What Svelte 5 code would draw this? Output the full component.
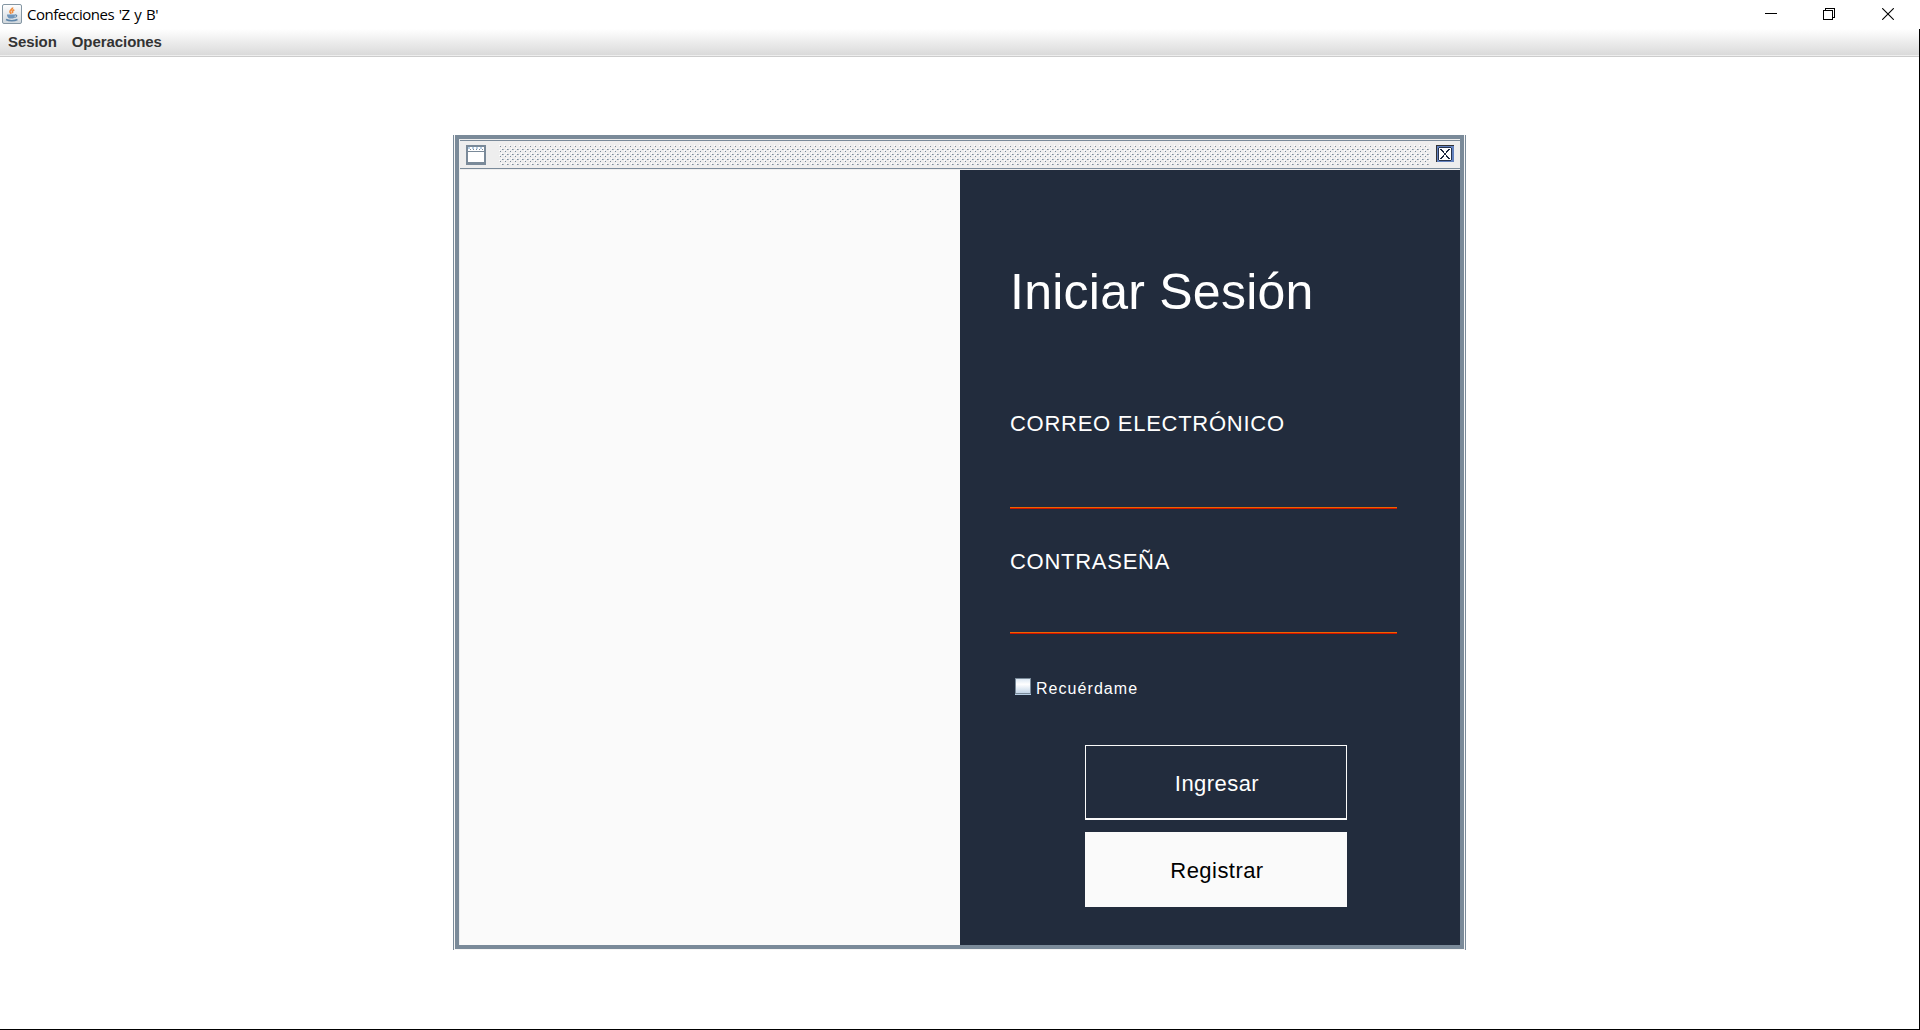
<script>
  const menus = ['Sesion', 'Operaciones'];
  let remember = $state(false);
</script>

<div class="app">
  <header class="titlebar">
    <svg class="java" width="20" height="20" viewBox="0 0 20 20">
      <defs>
        <linearGradient id="tile" x1="0" y1="0" x2="0" y2="1">
          <stop offset="0" stop-color="#ffffff" />
          <stop offset="1" stop-color="#cfd6dc" />
        </linearGradient>
      </defs>
      <rect x="0.5" y="0.5" width="19" height="19" rx="1.5" fill="url(#tile)" stroke="#8496a3" />
      <path d="M10.500 3.500c.6 1.800-3.100 2.700-2.500 4.500.3.800.9 1.100 1 1.900M12.300 5.700c-2 1-2.400 2-1.400 3.300" fill="none" stroke="#ee8a3c" stroke-width="1.700" />
      <path d="M5 10.500h8c0 2-.7 3.500-2 4h-3.500c-1.600-.5-2.500-2-2.500-4z" fill="#7095ba" />
      <path d="M13 11c2.500-.4 2.300 2.200-.7 2.500" fill="none" stroke="#5f86aa" stroke-width="1.200" />
      <path d="M4 15.500c3 1.500 8.500 1.500 11.500 0" fill="none" stroke="#5f86aa" stroke-width="1.500" />
    </svg>
    <span class="title">Confecciones 'Z y B'</span>
    <div class="controls">
      <svg width="12" height="12" viewBox="0 0 12 12" shape-rendering="crispEdges"><path d="M0 5.500h12" stroke="#000" /></svg>
      <svg width="12" height="12" viewBox="0 0 12 12" shape-rendering="crispEdges">
        <path d="M.5 2.500h9v9h-9zM2.500 2V.5h9v9H10" fill="none" stroke="#000" />
      </svg>
      <svg width="12" height="12" viewBox="0 0 12 12"><path d="M.2.200l11.600 11.600M11.800.200L.2 11.800" stroke="#000" stroke-width="1.100" /></svg>
    </div>
  </header>

  <div class="body">
    <nav class="menubar">
      {#each menus as menu}<span>{menu}</span>{/each}
    </nav>
    <main class="desktop">
      <section class="frame">
        <div class="bevel">
          <div class="caption">
            <svg width="20" height="20" viewBox="0 0 20 20" shape-rendering="crispEdges">
              <rect width="20" height="20" rx="1" fill="#7a8a99" />
              <rect x="2" y="2" width="16" height="4" fill="#fff" />
              <path d="M2 3h16" stroke="#b8cfe5" stroke-width="2" stroke-dasharray="2 2" />
              <path d="M4 4.500h14" stroke="#7a8a99" stroke-dasharray="1 2" />
              <rect x="2" y="7" width="16" height="10" fill="#fff" />
            </svg>
            <svg class="bumps" width="931" height="20" shape-rendering="crispEdges">
              <defs>
                <pattern id="bump" width="5" height="5" patternUnits="userSpaceOnUse">
                  <rect x="0" y="0" width="1" height="1" fill="#fff" />
                  <rect x="1" y="1" width="1" height="1" fill="#7a8a99" />
                  <rect x="2" y="3" width="1" height="1" fill="#fff" />
                  <rect x="3" y="4" width="1" height="1" fill="#7a8a99" />
                  <rect x="4" y="4" width="1" height="1" fill="#a9b4be" />
                </pattern>
              </defs>
              <rect width="931" height="20" fill="url(#bump)" />
            </svg>
            <svg width="18" height="17" viewBox="0 0 18 17" shape-rendering="crispEdges">
              <rect width="18" height="17" fill="#6382bf" />
              <path d="M0 .5h18M.5 0v17" stroke="#333" />
              <rect x="3" y="3" width="12" height="12" fill="#fff" />
              <path d="M3 2.500h12M3 15.500h12M2.500 3v12M15.500 3v12" stroke="#26344f" />
              <path d="M4 4h2v1h1v1h1v2h2V6h1V5h1V4h2v1h-1v1h-1v1h-1v1h-1v2h1v1h1v1h1v1h1v1h-2v-1h-1v-1h-1v-2H8v2H7v1H6v1H4v-1h1v-1h1v-1h1v-1h1V8H7V7H6V6H5V5H4z" fill="#1b2740" />
            </svg>
          </div>
          <div class="content">
            <div class="left"></div>
            <form class="login">
              <h1>Iniciar Sesión</h1>
              <label class="field">CORREO ELECTRÓNICO<span class="line"></span></label>
              <label class="field second">CONTRASEÑA<span class="line"></span></label>
              <label class="remember">
                <input type="checkbox" bind:checked={remember} /><span>Recuérdame</span>
              </label>
              <button type="button" class="enter">Ingresar</button>
              <button type="button" class="register">Registrar</button>
            </form>
          </div>
        </div>
      </section>
    </main>
  </div>
</div>

<style>
  .app {
    box-sizing: border-box;
    width: 1920px;
    height: 1030px;
    display: flex;
    flex-direction: column;
    overflow: hidden;
    background: #fff;
    font-family: "Liberation Sans", Arial, sans-serif;
  }
  .titlebar {
    height: 29px;
    display: flex;
    align-items: flex-start;
    padding: 0 26px 0 2px;
  }
  .java { margin-top: 4px; }
  .title {
    margin: 4px 0 0 5px;
    font: 15px/20px "Open Sans", "Noto Sans", sans-serif;
    letter-spacing: -0.5px;
    word-spacing: 1.3px;
    color: #000;
  }
  .controls {
    display: flex;
    gap: 47px;
    margin: 8px 0 0 auto;
  }
  .controls svg:first-child { margin-right: -1px; }
  .body {
    flex: 1;
    box-sizing: border-box;
    display: flex;
    flex-direction: column;
    border-right: 1px solid #000;
    border-bottom: 1px solid #000;
  }
  .menubar {
    box-sizing: border-box;
    height: 28px;
    display: flex;
    gap: 15px;
    padding: 4px 8px 0;
    border-bottom: 1px solid #ccc;
    background: linear-gradient(#fff, #dadada 26px, #eee 26px);
    font-size: 15px;
    line-height: 18px;
    font-weight: bold;
    letter-spacing: -0.07px;
    color: #333;
  }
  .desktop {
    flex: 1;
    padding: 78px 0 0 453px;
  }
  .frame {
    box-sizing: border-box;
    width: 1013px;
    height: 815px;
    padding: 0 1px 1px;
    border: solid #7a8a99;
    border-width: 0 1px;
    background: #f6f6f6;
  }
  .bevel {
    box-sizing: border-box;
    width: 1009px;
    height: 814px;
    border: 4px solid #7a8a99;
    padding: 1px 0 0 1px;
    display: flex;
    flex-direction: column;
    background: #eee;
  }
  .caption {
    box-sizing: border-box;
    height: 29px;
    border: solid #7a8a99;
    border-width: 1px 0;
    display: flex;
    padding: 4px 6px 0;
  }
  .bumps { margin: 0 6px 0 13px; }
  .content {
    flex: 1;
    display: grid;
    grid-template-columns: 500px 500px;
    border-top: 1px solid #eee;
  }
  .left { background: #fafafa; }
  .login {
    background: #222c3d;
    color: #fff;
    display: flex;
    flex-direction: column;
    align-items: flex-start;
    padding: 92px 50px 0;
  }
  h1 {
    margin: 0 0 89px;
    font-size: 50px;
    line-height: 60px;
    font-weight: normal;
    letter-spacing: 0.25px;
  }
  .field {
    width: 387px;
    height: 98px;
    display: flex;
    flex-direction: column;
    justify-content: space-between;
    font-size: 22px;
    line-height: 26px;
    letter-spacing: 0.73px;
  }
  .second {
    height: 85px;
    margin-top: 40px;
  }
  .line {
    height: 2px;
    background: linear-gradient(#ec6400 50%, #d01400 50%);
  }
  .remember {
    display: flex;
    gap: 5px;
    margin: 44px 0 46px 5px;
    font-size: 16px;
    line-height: 20px;
    letter-spacing: 1.05px;
  }
  .remember span { padding-top: 1px; }
  .remember input {
    appearance: none;
    box-sizing: border-box;
    width: 16px;
    height: 16px;
    margin: 0;
    border: 1px solid #7a8a99;
    background: linear-gradient(#dde8f3, #fff 38%, #c4d6e8);
    box-shadow: 0 1px #b8cfe5;
  }
  button {
    box-sizing: border-box;
    width: 262px;
    height: 75px;
    margin: 0 0 0 75px;
    padding: 3px 0 0 2px;
    border: 1px solid #fafafa;
    font: 22px/26px "Liberation Sans", Arial, sans-serif;
    letter-spacing: 0.45px;
  }
  .enter {
    border-bottom-width: 2px;
    background: #222c3d;
    color: #fff;
  }
  .register {
    margin-top: 12px;
    background: #fafafa;
    color: #000;
  }
</style>
